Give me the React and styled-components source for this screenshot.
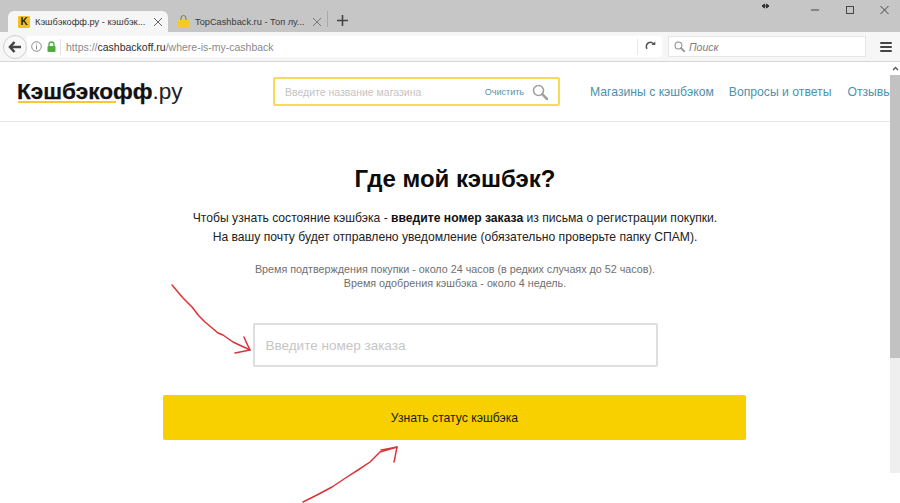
import React from "react";
import styled, { createGlobalStyle } from "styled-components";

const Global = createGlobalStyle`
  html, body { margin: 0; padding: 0; background: #fff; height: 503px; overflow: hidden; }
  * { box-sizing: border-box; }
  body { font-family: "Liberation Sans", Arial, sans-serif; }
`;
const Page = styled.div`position: relative; width: 900px; height: 503px; overflow: hidden; display: flex; flex-direction: column;`;
const TabStrip = styled.div`height: 32px; background: #c6c6c6; display: flex; align-items: flex-end; padding-left: 8px; position: relative; flex: none;`;
const Tab = styled.div`
  width: ${p => p.$w}px; height: ${p => p.$h}px; display: flex; align-items: center; padding-left: ${p => p.$pl}px;
  background: ${p => p.$active ? "#f6f6f6" : "transparent"}; border-radius: 6px 6px 0 0;
  font-size: 9.25px; color: ${p => p.$active ? "#333" : "#3a3a3a"}; gap: 5px; flex: none;
`;
const TabTitle = styled.span`width: ${p => p.$w}px; white-space: nowrap; flex: none;`;
const Favicon = styled.span`width: 12px; height: 12px; background: #f8bf1f; color: #222; font-weight: 700; font-size: 10px; line-height: 12px; text-align: center; border-radius: 1px; flex: none;`;
const TabSep = styled.span`width: 1px; height: 16px; background: #a9a9a9; margin: 0 8px 5px 4px; flex: none; align-self: flex-end;`;
const WindowControls = styled.div`position: absolute; right: 0; top: 0;`;
const Toolbar = styled.div`height: 30px; background: #f6f6f6; border-bottom: 1px solid #d6d6d6; display: flex; align-items: center; padding-left: 3px; flex: none;`;
const BackBtn = styled.div`width: 24px; height: 24px; border-radius: 50%; border: 1px solid #cfcfcf; background: #f8f8f8; display: flex; align-items: center; justify-content: center; flex: none;`;
const Url = styled.div`width: 635px; height: 21px; background: #fff; display: flex; align-items: center; padding-left: 4px; font-size: 10.5px; color: #8a8a8a; flex: none; border-radius: 0 2px 2px 0;`;
const UrlIcons = styled.div`display: flex; align-items: center; gap: 5px; width: 30px; height: 16px; border-right: 1px solid #e2e2e2; margin-right: 5px; flex: none;`;
const Host = styled.span`color: #2c2c2c;`;
const UrlEnd = styled.div`margin-left: auto; width: 25px; height: 16px; border-left: 1px solid #e8e8e8; display: flex; align-items: center; justify-content: center;`;
const SearchBar = styled.div`width: 198px; height: 21px; margin-left: 6px; background: #fff; border: 1px solid #e6e6e6; display: flex; align-items: center; padding-left: 5px; gap: 4px; font-size: 10.5px; font-style: italic; color: #7d7d7d; flex: none;`;
const Burger = styled.div`margin-left: 14px; width: 12px; display: flex; flex-direction: column; gap: 2px; flex: none; span { height: 2px; background: #444; border-radius: 1px; }`;
const Viewport = styled.div`flex: 1; display: flex; min-height: 0;`;
const Content = styled.div`width: 890px; overflow: hidden; flex: none;`;
const Scrollbar = styled.div`width: 10px; flex: none; background: #fff; display: flex; flex-direction: column;`;
const ScrollUp = styled.div`height: 13px; display: flex; align-items: center; justify-content: center; flex: none;`;
const Thumb = styled.div`height: 283px; background: #c2c2c2; flex: none;`;
const Track = styled.div`height: 115px; background: #efefef; flex: none;`;
const Header = styled.header`height: 60px; border-bottom: 1px solid #e7e7e7; display: flex; align-items: center; padding-left: 17px; white-space: nowrap; width: 930px;`;
const Logo = styled.div`position: relative; width: 256px; font-size: 22.6px; color: #111; flex: none; line-height: 28px; -webkit-text-stroke: .25px #111;`;
const LogoRest = styled.span`font-weight: 400; -webkit-text-stroke: 0; color: #222;`;
const LogoLine = styled.span`position: absolute; left: 1px; top: 23px; width: 98px; height: 2.5px; background: #f6c92d;`;
const StoreSearch = styled.div`width: 287px; height: 29px; border: 2px solid #f6dc55; border-radius: 2px; display: flex; align-items: center; padding: 0 10px 0 10px; flex: none;`;
const StorePh = styled.span`font-size: 10.5px; color: #c4c4c4;`;
const Clear = styled.span`font-size: 9px; color: #4f94ad; margin-left: auto; margin-right: 8px;`;
const NavLink = styled.a`font-size: 12.2px; color: #4a93ad; margin-left: ${p => p.$ml}px; flex: none;`;
const Main = styled.main`padding-left: 20px; display: flex; flex-direction: column; align-items: center;`;
const Title = styled.h1`margin: 42px 0 0; font-size: 24px; line-height: 30px; font-weight: 700; color: #0c0c0c;`;
const Lead = styled.p`margin: 15px 0 0; font-size: 12.15px; line-height: 19px; text-align: center; color: #222; b { color: #111; }`;
const Note = styled.p`margin: 15px 0 0; font-size: 10.75px; line-height: 14px; text-align: center; color: #6f6f6f;`;
const OrderInput = styled.div`margin-top: 33px; width: 405px; height: 44px; border: 2px solid #dedede; border-radius: 2px; display: flex; align-items: center; padding-left: 11px; font-size: 13.5px; color: #c6c6c6;`;
const Submit = styled.div`margin-top: 28px; margin-left: -1px; width: 583px; height: 45px; background: #f8d000; border-radius: 2px; display: flex; align-items: center; justify-content: center; font-size: 12.2px; color: #1c1c1c;`;
const Annotation = styled.svg`position: absolute; left: 0; top: 0; pointer-events: none;`;

const X = ({ c = "#666", s = 10 }) => (
  <svg width={s} height={s} viewBox="0 0 10 10" style={{ flex: "none" }}><path d="M1 1l8 8M9 1l-8 8" stroke={c} strokeWidth="1" fill="none" /></svg>
);
const Glass = ({ s, c, w = 1.5 }) => (
  <svg width={s} height={s} viewBox="0 0 16 16" style={{ flex: "none" }}>
    <circle cx="6.5" cy="6.5" r="5" fill="none" stroke={c} strokeWidth={w} />
    <path d="M10.2 10.2L15 15" stroke={c} strokeWidth={w + 0.9} strokeLinecap="round" />
  </svg>
);

export default function App() {
  return (
    <Page>
      <Global />
      <TabStrip>
        <Tab $active $w={160} $h={21} $pl={10}>
          <Favicon>K</Favicon>
          <TabTitle $w={113}>Кэшбэкофф.ру - кэшбэк...</TabTitle>
          <X />
        </Tab>
        <Tab $w={155} $h={21} $pl={9}>
          <svg width="13" height="13" viewBox="0 0 13 13" style={{ flex: "none" }}>
            <path d="M4 5V3a2.5 2.5 0 015 0v2" fill="none" stroke="#8a7a3a" strokeWidth="1" />
            <rect x="1" y="5" width="11" height="8" rx="1" fill="#f7c928" />
          </svg>
          <TabTitle $w={112}>TopCashback.ru - Топ лу...</TabTitle>
          <X c="#777" />
        </Tab>
        <TabSep />
        <svg width="13" height="13" viewBox="0 0 13 13" style={{ flex: "none", marginBottom: 5 }}>
          <path d="M6.5 1v11M1 6.5h11" stroke="#444" strokeWidth="1.6" />
        </svg>
        <WindowControls>
          <svg width="140" height="20" viewBox="0 0 140 20">
            <path d="M2 6h7M2 6l2.500-2v4zM9 6L6.500 4v4z" stroke="#333" strokeWidth="1" fill="#333" />
            <path d="M51 10h8" stroke="#444" strokeWidth="1" />
            <rect x="86.500" y="6.500" width="7" height="7" fill="none" stroke="#444" strokeWidth="1" />
            <path d="M120.500 6l8 8M128.500 6l-8 8" stroke="#444" strokeWidth="1" />
          </svg>
        </WindowControls>
      </TabStrip>
      <Toolbar>
        <BackBtn>
          <svg width="14" height="12" viewBox="0 0 14 12"><path d="M6.500 1L2 6l4.500 5M2.500 6H13" fill="none" stroke="#444" strokeWidth="2.600" /></svg>
        </BackBtn>
        <Url>
          <UrlIcons>
            <svg width="11" height="11" viewBox="0 0 11 11" style={{ flex: "none" }}><circle cx="5.500" cy="5.500" r="4.800" fill="none" stroke="#888" /><path d="M5.500 4.500v4M5.500 2.500v1" stroke="#888" /></svg>
            <svg width="9" height="11" viewBox="0 0 9 11" style={{ flex: "none" }}><path d="M2 5V3.500a2.500 2.500 0 015 0V5" fill="none" stroke="#4caf3a" strokeWidth="1.300" /><rect x="0.500" y="5" width="8" height="6" rx="1" fill="#4caf3a" /></svg>
          </UrlIcons>
          https://<Host>cashbackoff.ru</Host>/where-is-my-cashback
          <UrlEnd>
            <svg width="11" height="11" viewBox="0 0 11 11"><path d="M9 3.200A4 4 0 102 7.800" fill="none" stroke="#555" strokeWidth="1.500" /><path d="M6.500 4h3.800V.5z" fill="#555" /></svg>
          </UrlEnd>
        </Url>
        <SearchBar><Glass s={11} c="#8d8d8d" />Поиск</SearchBar>
        <Burger><span /><span /><span /></Burger>
      </Toolbar>
      <Viewport>
        <Content>
          <Header>
            <Logo>
              <b>Кэшбэкофф</b><LogoRest>.ру</LogoRest>
              <LogoLine />
            </Logo>
            <StoreSearch>
              <StorePh>Введите название магазина</StorePh>
              <Clear>Очистить</Clear>
              <Glass s={16} c="#a0a0a0" w={1.6} />
            </StoreSearch>
            <NavLink $ml={30}>Магазины с кэшбэком</NavLink>
            <NavLink $ml={15}>Вопросы и ответы</NavLink>
            <NavLink $ml={16}>Отзывы</NavLink>
          </Header>
          <Main>
            <Title>Где мой кэшбэк?</Title>
            <Lead>
              Чтобы узнать состояние кэшбэка - <b>введите номер заказа</b> из письма о регистрации покупки.<br />
              На вашу почту будет отправлено уведомление (обязательно проверьте папку СПАМ).
            </Lead>
            <Note>
              Время подтверждения покупки - около 24 часов (в редких случаях до 52 часов).<br />
              Время одобрения кэшбэка - около 4 недель.
            </Note>
            <OrderInput>Введите номер заказа</OrderInput>
            <Submit>Узнать статус кэшбэка</Submit>
          </Main>
        </Content>
        <Scrollbar>
          <ScrollUp>
            <svg width="7" height="5" viewBox="0 0 7 5"><path d="M1 4l2.500-2.500L6 4" fill="none" stroke="#555" strokeWidth="1.300" /></svg>
          </ScrollUp>
          <Thumb />
          <Track />
        </Scrollbar>
      </Viewport>
      <Annotation width="900" height="503" viewBox="0 0 900 503">
        <g fill="none" stroke="#dc3238" strokeWidth="1.500" strokeLinecap="round" strokeLinejoin="round">
          <path d="M172 285L183 298L186 301L192 307L199 316L205 322L218 333L223 335L233 342L250 350" />
          <path d="M244 337C246 342 248 346 250 350C245 351 240 352 235 353" />
          <path d="M303 502L317 495L332 487L347 477L358 470L370 462L380 452L397 447" />
          <path d="M381 450C387 449 392 448 397 447C396 452 395 458 394 462" />
        </g>
      </Annotation>
    </Page>
  );
}
